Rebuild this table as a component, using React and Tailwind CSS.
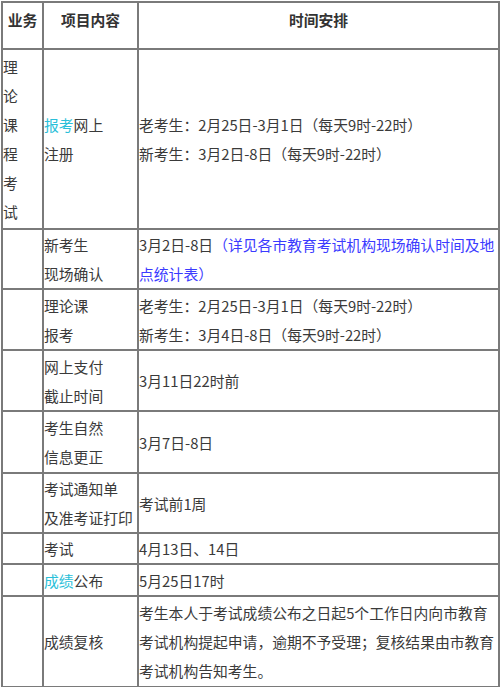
const cell = 'border-2 border-[#7a7a7a] p-0 align-middle text-left'

const rows = [
  {
    h: 'h-[180px]',
    biz: (
      <>理<br />论<br />课<br />程<br />考<br />试</>
    ),
    item: (
      <><span className="text-[#2bbfd9]">报考</span>网上<br />注册</>
    ),
    time: (
      <>老考生：2月25日-3月1日（每天9时-22时）<br />新考生：3月2日-8日（每天9时-22时）</>
    ),
  },
  {
    h: 'h-[60px]',
    item: <>新考生<br />现场确认</>,
    time: (
      <>3月2日-8日<span className="text-[#3b3bff]">（详见各市教育考试机构现场确认时间及地点统计表）</span></>
    ),
  },
  {
    h: 'h-[61px]',
    item: <>理论课<br />报考</>,
    time: (
      <>老考生：2月25日-3月1日（每天9时-22时）<br />新考生：3月4日-8日（每天9时-22时）</>
    ),
  },
  { h: 'h-[61px]', item: <>网上支付<br />截止时间</>, time: '3月11日22时前' },
  { h: 'h-[62px]', item: <>考生自然<br />信息更正</>, time: '3月7日-8日' },
  { h: 'h-[60px]', item: <>考试通知单<br />及准考证打印</>, time: '考试前1周' },
  { h: 'h-[31px]', item: '考试', time: '4月13日、14日' },
  {
    h: 'h-[32px]',
    item: <><span className="text-[#2bbfd9]">成绩</span>公布</>,
    time: '5月25日17时',
  },
  {
    h: 'h-[91px]',
    item: '成绩复核',
    time: '考生本人于考试成绩公布之日起5个工作日内向市教育考试机构提起申请，逾期不予受理；复核结果由市教育考试机构告知考生。',
  },
]

export default function App() {
  return (
    <div className="w-[500px] h-[687px] bg-white overflow-hidden font-['Microsoft_YaHei','Noto_Sans_CJK_SC',sans-serif] text-[14.8px] leading-[29px] text-[#3a3a3a]">
      <table className="ml-[1px] mt-[1px] w-[497px] table-fixed border-collapse">
        <colgroup>
          <col className="w-[41px]" />
          <col className="w-[95px]" />
          <col className="w-[361px]" />
        </colgroup>
        <thead>
          <tr className="h-[47px]">
            <th className="border-2 border-[#7a7a7a] p-0 pt-[2px] align-top text-center font-bold text-[#333]">业务</th>
            <th className="border-2 border-[#7a7a7a] p-0 pt-[2px] align-top text-center font-bold text-[#333]">项目内容</th>
            <th className="border-2 border-[#7a7a7a] p-0 pt-[2px] align-top text-center font-bold text-[#333]">时间安排</th>
          </tr>
        </thead>
        <tbody>
          {rows.map((r, i) => (
            <tr key={i} className={r.h}>
              <td className={cell}>{r.biz}</td>
              <td className={cell}>{r.item}</td>
              <td className={cell}>{r.time}</td>
            </tr>
          ))}
        </tbody>
      </table>
    </div>
  )
}
